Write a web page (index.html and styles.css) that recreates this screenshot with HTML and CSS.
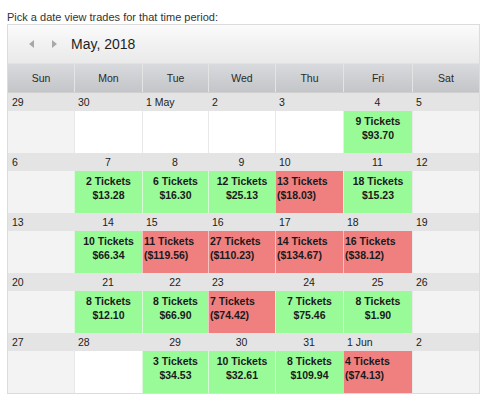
FILE: index.html
```html
<!DOCTYPE html>
<html>
<head>
<meta charset="utf-8">
<link rel="stylesheet" href="styles.css">
</head>
<body>
<p class="caption">Pick a date view trades for that time period:</p>
<div class="cal">
  <div class="cal-head">
    <span class="nav prev"></span>
    <span class="nav next"></span>
    <span class="title">May, 2018</span>
  </div>
  <div class="dow">
    <div>Sun</div><div>Mon</div><div>Tue</div><div>Wed</div><div>Thu</div><div>Fri</div><div>Sat</div>
  </div>

  <div class="week">
    <div class="d">29</div><div class="d">30</div><div class="d">1 May</div><div class="d">2</div><div class="d">3</div><div class="d c">4</div><div class="d">5</div>
    <div class="cell wkend"></div><div class="cell"></div><div class="cell"></div><div class="cell"></div><div class="cell"></div>
    <div class="cell pos">9 Tickets<br>$93.70</div><div class="cell wkend"></div>
  </div>

  <div class="week">
    <div class="d">6</div><div class="d c">7</div><div class="d c">8</div><div class="d c">9</div><div class="d">10</div><div class="d c">11</div><div class="d">12</div>
    <div class="cell wkend"></div>
    <div class="cell pos">2 Tickets<br>$13.28</div>
    <div class="cell pos">6 Tickets<br>$16.30</div>
    <div class="cell pos">12 Tickets<br>$25.13</div>
    <div class="cell neg">13 Tickets<br>($18.03)</div>
    <div class="cell pos">18 Tickets<br>$15.23</div>
    <div class="cell wkend"></div>
  </div>

  <div class="week">
    <div class="d">13</div><div class="d c">14</div><div class="d">15</div><div class="d">16</div><div class="d">17</div><div class="d">18</div><div class="d">19</div>
    <div class="cell wkend"></div>
    <div class="cell pos">10 Tickets<br>$66.34</div>
    <div class="cell neg">11 Tickets<br>($119.56)</div>
    <div class="cell neg">27 Tickets<br>($110.23)</div>
    <div class="cell neg">14 Tickets<br>($134.67)</div>
    <div class="cell neg">16 Tickets<br>($38.12)</div>
    <div class="cell wkend"></div>
  </div>

  <div class="week">
    <div class="d">20</div><div class="d c">21</div><div class="d c">22</div><div class="d">23</div><div class="d c">24</div><div class="d c">25</div><div class="d">26</div>
    <div class="cell wkend"></div>
    <div class="cell pos">8 Tickets<br>$12.10</div>
    <div class="cell pos">8 Tickets<br>$66.90</div>
    <div class="cell neg">7 Tickets<br>($74.42)</div>
    <div class="cell pos">7 Tickets<br>$75.46</div>
    <div class="cell pos">8 Tickets<br>$1.90</div>
    <div class="cell wkend"></div>
  </div>

  <div class="week">
    <div class="d">27</div><div class="d">28</div><div class="d c">29</div><div class="d c">30</div><div class="d c">31</div><div class="d">1 Jun</div><div class="d">2</div>
    <div class="cell wkend"></div>
    <div class="cell"></div>
    <div class="cell pos">3 Tickets<br>$34.53</div>
    <div class="cell pos">10 Tickets<br>$32.61</div>
    <div class="cell pos">8 Tickets<br>$109.94</div>
    <div class="cell neg">4 Tickets<br>($74.13)</div>
    <div class="cell wkend"></div>
  </div>
</div>
</body>
</html>
```

FILE: styles.css
```css
:root {
  --cols: 66px 68px 66px 67px 68px 69px 67px;
}
html, body {
  margin: 0;
  padding: 0;
  background: #fff;
}
body {
  padding: 0 7px;
  font-family: "Liberation Sans", Arial, sans-serif;
  color: #222;
}
.caption {
  margin: 10px 0 0;
  font-size: 11px;
  line-height: 14px;
  color: #333;
}
.cal {
  width: 473px;
  box-sizing: border-box;
  border: 1px solid #dcdcdc;
}
.cal-head {
  height: 38px;
  display: flex;
  align-items: center;
  background: linear-gradient(#fbfbfb, #e9e9e9);
  border-bottom: 1px solid #e2e2e2;
}
.nav {
  width: 0;
  height: 0;
  border-top: 4px solid transparent;
  border-bottom: 4px solid transparent;
}
.prev {
  margin-left: 21px;
  border-right: 5px solid #a8a8a8;
}
.next {
  margin-left: 18px;
  border-left: 5px solid #a8a8a8;
}
.title {
  margin-left: 14px;
  font-size: 14px;
  color: #1e1e1e;
}
.dow {
  display: grid;
  grid-template-columns: var(--cols);
  height: 28px;
  background: linear-gradient(#d9dadd, #c3c5c8);
  border-bottom: 1px solid #d0d0d0;
}
.dow div {
  font-size: 10.5px;
  line-height: 28px;
  text-align: center;
  color: #2a2a2a;
  border-left: 1px solid #e4e4e4;
}
.dow div:first-child {
  border-left: none;
}
.week {
  display: grid;
  grid-template-columns: var(--cols);
  grid-template-rows: 18px 42px;
}
.d {
  background: #e4e4e4;
  font-size: 10.5px;
  line-height: 18px;
  padding-left: 4px;
  color: #222;
  white-space: nowrap;
}
.d.c {
  text-align: center;
  padding-left: 0;
}
.cell {
  background: #fff;
  border-left: 1px solid #e8e8e8;
  font-size: 10.5px;
  font-weight: bold;
  line-height: 14px;
  padding-top: 3px;
  color: #1a1a1a;
  white-space: nowrap;
}
.cell:nth-child(8) {
  border-left: none;
}
.cell.wkend {
  background: #f3f3f3;
}
.cell.pos {
  background: #98fb98;
  text-align: center;
  border-left-color: #d8f8d8;
}
.cell.neg {
  background: #f08080;
  padding-left: 1px;
  border-left-color: #f4c4c4;
}
```
